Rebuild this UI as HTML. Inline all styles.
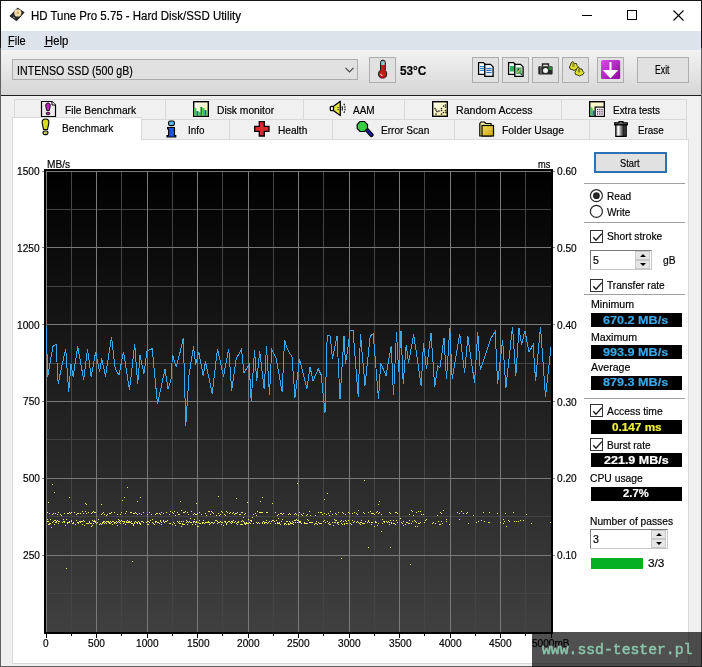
<!DOCTYPE html>
<html><head><meta charset="utf-8">
<style>
*{margin:0;padding:0;box-sizing:border-box}
html,body{width:702px;height:667px;overflow:hidden;background:#f0f0f0}
body{position:relative;font-family:"Liberation Sans",sans-serif;color:#000}
.a{position:absolute}
.t{position:absolute;line-height:1;white-space:nowrap;transform-origin:0 0;-webkit-text-stroke-width:0.2px}
.btn{position:absolute;background:#e1e1e1;border:1px solid #adadad}
.tab{position:absolute;background:#f0f0f0;border:1px solid #d9d9d9;border-bottom:none}
.sep{position:absolute;height:1px;background:#a0a0a0;left:584px;width:101px}
.vbox{position:absolute;left:591px;width:91px;height:14px;background:#000}
.chk{position:absolute;left:590px;width:13px;height:13px;border:1px solid #333;background:#fff}
.chk svg{position:absolute;left:1px;top:1px}
.spin{position:absolute;background:#fff;border:1px solid #7a7a7a;border-right-color:#c8c8c8;border-bottom-color:#c8c8c8}
.sb{position:absolute;width:15px;height:9px;background:#e6e6e6;border:1px solid #c8c8c8}
</style></head><body>
<!-- window frame -->
<div class="a" style="left:0;top:0;width:702px;height:667px;background:#5f5f5f"></div>
<div class="a" style="left:0;top:0;width:702px;height:48px;background:#161616"></div>
<div class="a" style="left:1px;top:1px;width:700px;height:665px;background:#f0f0f0"></div>
<div class="a" style="left:1px;top:1px;width:700px;height:30px;background:#fff"></div>
<svg class="a" style="left:8px;top:6px" width="18" height="17" viewBox="0 0 18 17">
 <path d="M9.6 2.1L16.1 6.4L8.6 14.8L1.9 10Z" fill="#262626" stroke="#111" stroke-width="0.8"/>
 <circle cx="9.8" cy="6.9" r="3.6" fill="#eedcae"/>
 <circle cx="9.8" cy="6.9" r="1.3" fill="#cfb468"/>
 <path d="M5 11L7 12" stroke="#888" stroke-width="1.2"/>
</svg>
<div class="a" style="left:582px;top:15px;width:10px;height:1px;background:#000"></div>
<div class="a" style="left:627px;top:10px;width:10px;height:10px;border:1px solid #000"></div>
<svg class="a" style="left:673px;top:10px" width="11" height="11" viewBox="0 0 11 11"><path d="M0.5 0.5L10.5 10.5M10.5 0.5L0.5 10.5" stroke="#000" stroke-width="1.1"/></svg>

<div class="a" style="left:1px;top:31px;width:700px;height:19px;background:#dde3ea"></div>
<div class="a" style="left:8px;top:46px;width:6px;height:1px;background:#000"></div>
<div class="a" style="left:44px;top:46px;width:8px;height:1px;background:#000"></div>

<div class="a" style="left:1px;top:50px;width:700px;height:45px;background:linear-gradient(#f3f3f3,#d6d6d6)"></div>
<!-- drive combo -->
<div class="a" style="left:12px;top:59px;width:346px;height:21px;background:#e1e1e1;border:1px solid #acacac"></div>
<svg class="a" style="left:345px;top:67px" width="9" height="6" viewBox="0 0 9 6"><path d="M0.5 0.8L4.5 4.8L8.5 0.8" stroke="#444" stroke-width="1.2" fill="none"/></svg>
<!-- thermometer -->
<div class="btn" style="left:369px;top:57px;width:27px;height:26px"></div>
<svg class="a" style="left:369px;top:57px" width="27" height="26" viewBox="0 0 27 26">
 <path d="M11.5 13V5.5A2.4 2.4 0 0 1 16.3 5.5V13Z" fill="#c81c1c" stroke="#1a1a1a" stroke-width="1"/>
 <rect x="12.2" y="4.2" width="3.4" height="3.8" fill="#70d8d8"/>
 <circle cx="13.6" cy="17" r="4.1" fill="#c81818" stroke="#1a1a1a" stroke-width="1"/>
 <rect x="12" y="12" width="3.8" height="3" fill="#c81818"/>
 <path d="M11.6 16.8Q12 18.6 13.5 18.6" stroke="#fff" stroke-width="1" fill="none"/>
</svg>
<!-- toolbar buttons -->
<div class="btn" style="left:472px;top:57px;width:27px;height:26px"></div>
<div class="btn" style="left:502px;top:57px;width:27px;height:26px"></div>
<div class="btn" style="left:532px;top:57px;width:27px;height:26px"></div>
<div class="btn" style="left:562px;top:57px;width:27px;height:26px"></div>
<div class="btn" style="left:597px;top:57px;width:27px;height:26px"></div>
<div class="btn" style="left:637px;top:57px;width:52px;height:26px"></div>
<svg class="a" style="left:472px;top:57px" width="27" height="26" viewBox="0 0 27 26">
 <path d="M6.6 5.6H11.5L13 7.1V17.4H6.6Z" fill="#fff" stroke="#000" stroke-width="1.3"/>
 <path d="M8 9.5H12.5M8 11.4H12.5M8 13.4H12.5" stroke="#2e86c8" stroke-width="1.1"/>
 <path d="M12.8 7.4H18.6L21.1 9.9V19.4H12.8Z" fill="#e4eefa" stroke="#000" stroke-width="1.3"/>
 <path d="M14.3 11.5H19.5M14.3 13.4H19.5M14.3 15.5H19.5" stroke="#2e70c0" stroke-width="1.1"/>
</svg>
<svg class="a" style="left:502px;top:57px" width="27" height="26" viewBox="0 0 27 26">
 <path d="M6.6 5.6H11.5L13 7.1V17.4H6.6Z" fill="#fff" stroke="#000" stroke-width="1.3"/>
 <rect x="8" y="9" width="4.5" height="5.5" fill="#30b060"/>
 <path d="M12.8 7.4H18.6L21.1 9.9V19.4H12.8Z" fill="#eef4f0" stroke="#000" stroke-width="1.3"/>
 <rect x="14.3" y="10.5" width="5.3" height="6.5" fill="#40a860"/>
 <path d="M15.5 16L18.5 12" stroke="#c8c040" stroke-width="1.2"/>
 <circle cx="16.5" cy="12.3" r="0.6" fill="#000"/><circle cx="19.3" cy="17.3" r="0.7" fill="#000"/>
</svg>
<svg class="a" style="left:532px;top:57px" width="27" height="26" viewBox="0 0 27 26">
 <path d="M10.5 9V7H16.5V9" fill="none" stroke="#222" stroke-width="1.4"/>
 <rect x="6.3" y="9.2" width="14.3" height="8.3" rx="0.8" fill="#262626"/>
 <rect x="8.4" y="9.2" width="1" height="8.3" fill="#888"/>
 <rect x="16.5" y="10" width="3.5" height="3" fill="#1c8c30"/>
 <circle cx="13.5" cy="13.4" r="2.5" fill="#f4f4f4"/>
</svg>
<svg class="a" style="left:562px;top:57px" width="27" height="26" viewBox="0 0 27 26">
 <g stroke="#3a3a10" stroke-width="1" fill="#dede30">
  <path d="M11 4.5L12.5 6.5L14.5 6.5L15 8.5L16.5 10L15.5 12L14 12.5L12 13.5L10 12.5L8 12L7.5 10L8.5 8L9 6Z"/>
  <path d="M16.5 10L18 12L20 12L20.5 14L22 15.5L21 17.5L19.5 18L17.5 19L15.5 18L13.5 17.5L13 15.5L14 13.5L14.5 11.5Z"/>
 </g>
 <path d="M11 6V10M12 6V10M16.5 11.5V15.5M17.5 11.5V15.5" stroke="#6a6a30" stroke-width="0.8"/>
</svg>
<svg class="a" style="left:597px;top:57px" width="27" height="26" viewBox="0 0 27 26">
 <defs><linearGradient id="pg" x1="0" y1="0" x2="1" y2="1"><stop offset="0" stop-color="#d850e8"/><stop offset="1" stop-color="#8a0898"/></linearGradient></defs>
 <rect x="4" y="3" width="19.2" height="19" rx="1.5" fill="url(#pg)"/>
 <path d="M13.5 5V17.5M8 14L13.5 20L19 14Z" stroke="#fff" stroke-width="2" fill="#fff" stroke-linejoin="miter"/>
</svg>
<div class="a" style="left:1px;top:95px;width:700px;height:1px;background:#1e1e1e"></div>

<!-- tab row 1 -->
<div class="tab" style="left:14px;top:99px;width:152px;height:20px"></div>
<div class="tab" style="left:165px;top:99px;width:139px;height:20px"></div>
<div class="tab" style="left:303px;top:99px;width:102px;height:20px"></div>
<div class="tab" style="left:404px;top:99px;width:158px;height:20px"></div>
<div class="tab" style="left:561px;top:99px;width:126px;height:20px"></div>
<!-- tab row 2 -->
<div class="tab" style="left:141px;top:119px;width:89px;height:21px"></div>
<div class="tab" style="left:229px;top:119px;width:104px;height:21px"></div>
<div class="tab" style="left:332px;top:119px;width:123px;height:21px"></div>
<div class="tab" style="left:454px;top:119px;width:136px;height:21px"></div>
<div class="tab" style="left:589px;top:119px;width:98px;height:21px"></div>
<!-- content panel -->
<div class="a" style="left:12px;top:139px;width:677px;height:525px;background:#fff;border:1px solid #d9d9d9"></div>
<div class="a" style="left:12px;top:117px;width:130px;height:23px;background:#fff;border:1px solid #d9d9d9;border-bottom:none"></div>

<!-- tab icons -->
<svg class="a" style="left:40px;top:100px" width="17" height="18" viewBox="0 0 17 18">
 <path d="M1.5 1.5H12L15.5 5V16.5H1.5Z" fill="#ececec" stroke="#000" stroke-width="1.2"/>
 <path d="M12 1.5V5H15.5" fill="#fff" stroke="#000" stroke-width="1"/>
 <path d="M8 3C9.8 3 10.6 4.5 10.2 6.5L9.3 10.5H6.7L5.8 6.5C5.4 4.5 6.2 3 8 3Z" fill="#c020c0" stroke="#000" stroke-width="0.9"/>
 <rect x="6.3" y="12.3" width="3.4" height="2.4" rx="1" fill="#c020c0" stroke="#000" stroke-width="0.9"/>
</svg>
<svg class="a" style="left:41px;top:118px" width="9" height="18" viewBox="0 0 9 18">
 <path d="M4.5 1C7 1 8.3 2.6 7.8 5.2L6.5 11.5H2.5L1.2 5.2C0.7 2.6 2 1 4.5 1Z" fill="#d8d828" stroke="#000" stroke-width="1.1"/>
 <rect x="2" y="13" width="5" height="3.6" rx="1.6" fill="#c8c860" stroke="#000" stroke-width="1.1"/>
</svg>
<svg class="a" style="left:193px;top:101px" width="16" height="16" viewBox="0 0 16 16">
 <defs><linearGradient id="dmg" x1="0" y1="0" x2="1" y2="1"><stop offset="0" stop-color="#fff"/><stop offset="1" stop-color="#f8f0a0"/></linearGradient></defs>
 <rect x="0.7" y="0.7" width="14.6" height="14.6" fill="url(#dmg)" stroke="#000" stroke-width="1.4"/>
 <path d="M1.4 7H3.4V14.6H1.4Z" fill="#30d040"/><path d="M3.4 10H5.4V14.6H3.4Z" fill="#1a7080"/>
 <path d="M5.4 11H7.4V14.6H5.4Z" fill="#30d040"/><path d="M7.4 6H9.4V14.6H7.4Z" fill="#1a8040"/>
 <path d="M9.4 7H11.4V14.6H9.4Z" fill="#30d040"/><path d="M11.4 9H13.4V14.6H11.4Z" fill="#1a7080"/>
 <path d="M13.4 10H14.6V14.6H13.4Z" fill="#30d040"/>
</svg>
<svg class="a" style="left:329px;top:100px" width="18" height="17" viewBox="0 0 18 17">
 <path d="M4.3 6.5L11.3 1.3V15.5L4.3 10.5Z" fill="#e4e43a" stroke="#000" stroke-width="1.3" stroke-linejoin="round"/>
 <rect x="1.3" y="6.3" width="3.2" height="4.4" rx="1.2" fill="#fff" stroke="#000" stroke-width="1.3"/>
 <rect x="8.6" y="7" width="1" height="1" fill="#000"/><rect x="8.6" y="9" width="1" height="1" fill="#000"/>
 <path d="M13 6.2Q14 8.4 13 10.6" stroke="#000" stroke-width="1.1" fill="none"/>
 <path d="M14.8 3.8Q17.3 8.4 14.8 13" stroke="#000" stroke-width="1.1" fill="none" stroke-dasharray="1.6 1"/>
</svg>
<svg class="a" style="left:432px;top:101px" width="16" height="16" viewBox="0 0 16 16">
 <defs><linearGradient id="rag" x1="0" y1="0" x2="1" y2="1"><stop offset="0" stop-color="#fffff0"/><stop offset="1" stop-color="#f6eea0"/></linearGradient></defs>
 <rect x="0.7" y="0.7" width="14.6" height="14.6" fill="url(#rag)" stroke="#000" stroke-width="1.4"/>
 <g fill="#202020"><circle cx="3" cy="7.5" r="0.8"/><circle cx="5" cy="10.5" r="0.85"/><circle cx="7" cy="10" r="0.85"/><circle cx="9.5" cy="7.5" r="0.85"/><circle cx="9.5" cy="9.5" r="0.85"/><circle cx="11.5" cy="5" r="0.85"/><circle cx="13.5" cy="4" r="0.85"/><circle cx="13.5" cy="6" r="0.85"/><circle cx="13.5" cy="9.5" r="0.85"/><circle cx="11.5" cy="11.5" r="0.85"/><circle cx="14" cy="11.5" r="0.85"/><circle cx="4" cy="13" r="0.85"/><circle cx="9.5" cy="13" r="0.85"/><circle cx="4" cy="9" r="0.85"/></g>
</svg>
<svg class="a" style="left:589px;top:101px" width="16" height="16" viewBox="0 0 16 16">
 <rect x="0.7" y="0.7" width="14.6" height="14.6" fill="#faf6cc" stroke="#000" stroke-width="1.4"/>
 <path d="M1.4 6.5H3.6V14.6H1.4Z" fill="#30d040"/><path d="M3.6 9.5H5.6V14.6H3.6Z" fill="#1a6a80"/>
 <path d="M6.2 15.3V6.2H15.3" fill="none" stroke="#000" stroke-width="1.3"/>
 <rect x="6.9" y="6.9" width="7.7" height="7.7" fill="#f6f0fa"/>
 <g fill="#3a203a"><rect x="8" y="8" width="1.2" height="1.2"/><rect x="10.2" y="8" width="1.2" height="1.2"/><rect x="12.4" y="8" width="1.2" height="1.2"/><rect x="8" y="10.2" width="1.2" height="1.2"/><rect x="10.2" y="10.2" width="1.2" height="1.2"/><rect x="12.4" y="10.2" width="1.2" height="1.2"/><rect x="8" y="12.4" width="1.2" height="1.2"/><rect x="10.2" y="12.4" width="1.2" height="1.2"/><rect x="12.4" y="12.4" width="1.2" height="1.2"/></g>
</svg>
<svg class="a" style="left:166px;top:120px" width="11" height="18" viewBox="0 0 11 18">
 <rect x="2.6" y="1" width="5.8" height="4.6" rx="1.6" fill="#58b8f0" stroke="#000" stroke-width="1.1"/>
 <path d="M1.5 7.5H8.5V15.5H9.8V17H1V15.5H2.6V9H1.5Z" fill="#2050e0" stroke="#000" stroke-width="1.1"/>
</svg>
<svg class="a" style="left:254px;top:121px" width="16" height="16" viewBox="0 0 16 16">
 <path d="M5.3 0.7H10.3V5.3H15V10.3H10.3V15H5.3V10.3H0.7V5.3H5.3Z" fill="#d82c2c" stroke="#000" stroke-width="1.3"/>
</svg>
<svg class="a" style="left:356px;top:120px" width="18" height="18" viewBox="0 0 18 18">
 <path d="M10.5 9.5L15.5 15" stroke="#000" stroke-width="4.2" stroke-linecap="round"/>
 <path d="M10.5 9.5L15.5 15" stroke="#1a1aa0" stroke-width="2.2" stroke-linecap="round"/>
 <path d="M4 1.5H8.5L11.5 4.5V8.5L8.5 11.5H4L1.2 8.5V4.5Z" fill="#38d040" stroke="#000" stroke-width="1.2"/>
</svg>
<svg class="a" style="left:479px;top:121px" width="16" height="16" viewBox="0 0 16 16">
 <defs><linearGradient id="fg" x1="0" y1="0" x2="1" y2="1"><stop offset="0" stop-color="#f0e060"/><stop offset="1" stop-color="#d0a010"/></linearGradient></defs>
 <path d="M0.8 2.5L2 1H5.5L6.8 2.5H12V15H0.8Z" fill="#f0e8a0" stroke="#000" stroke-width="1.2"/>
 <rect x="3" y="4.5" width="11.5" height="10.5" fill="url(#fg)" stroke="#000" stroke-width="1.2"/>
</svg>
<svg class="a" style="left:614px;top:121px" width="14" height="16" viewBox="0 0 14 16">
 <defs><linearGradient id="tg" x1="0" y1="0" x2="1" y2="0"><stop offset="0" stop-color="#999"/><stop offset="0.25" stop-color="#fff"/><stop offset="0.5" stop-color="#888"/><stop offset="0.75" stop-color="#222"/><stop offset="1" stop-color="#555"/></linearGradient></defs>
 <path d="M5 0.7H9V1.8H13.3V3.8H0.7V1.8H5Z" fill="#777" stroke="#000" stroke-width="1.2"/>
 <path d="M1.8 3.8H12.2V15.3H1.8Z" fill="url(#tg)" stroke="#000" stroke-width="1.2"/>
</svg>

<svg width="702" height="667" style="position:absolute;left:0;top:0">
<defs><linearGradient id="bg" x1="0" y1="0" x2="0" y2="1"><stop offset="0" stop-color="#000000"/><stop offset="1" stop-color="#404040"/></linearGradient></defs>
<rect x="44" y="169" width="509" height="465" fill="#000"/>
<rect x="46" y="171" width="505" height="461" fill="url(#bg)"/>
<path d="M71.5 171V632M121.5 171V632M172.5 171V632M222.5 171V632M273.5 171V632M323.5 171V632M374.5 171V632M424.5 171V632M475.5 171V632M525.5 171V632M46 209.5H551M46 286.5H551M46 363.5H551M46 439.5H551M46 516.5H551M46 593.5H551" stroke="#444444" stroke-width="1" fill="none"/>
<path d="M46.5 171V632M96.5 171V632M147.5 171V632M197.5 171V632M248.5 171V632M298.5 171V632M349.5 171V632M399.5 171V632M450.5 171V632M500.5 171V632M551.5 171V632M46 171.5H551M46 247.5H551M46 324.5H551M46 401.5H551M46 478.5H551M46 555.5H551" stroke="#7a7a7a" stroke-width="1" fill="none"/>
<path d="M47 512h1v1h-1zM47 519h1v1h-1zM47 521h1v1h-1zM48 502h1v1h-1zM48 521h1v1h-1zM48 524h1v1h-1zM49 513h1v1h-1zM49 523h1v1h-1zM49 524h1v1h-1zM50 519h1v1h-1zM50 523h1v1h-1zM51 527h1v1h-1zM52 484h1v1h-1zM52 514h1v1h-1zM52 522h1v1h-1zM53 513h1v1h-1zM53 521h1v1h-1zM54 492h1v1h-1zM54 520h1v1h-1zM54 524h1v1h-1zM55 513h1v1h-1zM55 520h1v1h-1zM55 522h1v1h-1zM56 521h1v1h-1zM56 522h1v1h-1zM57 514h1v1h-1zM57 520h1v1h-1zM58 512h1v1h-1zM58 521h1v1h-1zM58 523h1v1h-1zM59 521h1v1h-1zM60 514h1v1h-1zM61 515h1v1h-1zM62 522h1v1h-1zM63 519h1v1h-1zM63 521h1v1h-1zM64 513h1v1h-1zM64 521h1v1h-1zM64 522h1v1h-1zM65 525h1v1h-1zM66 519h1v1h-1zM66 568h1v1h-1zM67 513h1v1h-1zM67 522h1v1h-1zM67 523h1v1h-1zM68 513h1v1h-1zM68 522h1v1h-1zM69 497h1v1h-1zM69 512h1v1h-1zM69 521h1v1h-1zM69 522h1v1h-1zM70 513h1v1h-1zM71 512h1v1h-1zM71 520h1v1h-1zM71 521h1v1h-1zM72 523h1v1h-1zM73 522h1v1h-1zM73 523h1v1h-1zM74 512h1v1h-1zM75 524h1v1h-1zM76 514h1v1h-1zM76 520h1v1h-1zM77 513h1v1h-1zM77 522h1v1h-1zM78 513h1v1h-1zM78 522h1v1h-1zM78 523h1v1h-1zM79 521h1v1h-1zM80 513h1v1h-1zM80 521h1v1h-1zM80 522h1v1h-1zM81 521h1v1h-1zM82 511h1v1h-1zM82 521h1v1h-1zM82 524h1v1h-1zM83 513h1v1h-1zM83 520h1v1h-1zM84 521h1v1h-1zM84 525h1v1h-1zM85 503h1v1h-1zM85 511h1v1h-1zM86 504h1v1h-1zM86 513h1v1h-1zM86 523h1v1h-1zM87 523h1v1h-1zM88 512h1v1h-1zM88 523h1v1h-1zM89 521h1v1h-1zM89 522h1v1h-1zM90 523h1v1h-1zM91 513h1v1h-1zM91 523h1v1h-1zM91 526h1v1h-1zM92 512h1v1h-1zM92 520h1v1h-1zM92 525h1v1h-1zM93 511h1v1h-1zM93 521h1v1h-1zM93 523h1v1h-1zM94 512h1v1h-1zM94 520h1v1h-1zM94 521h1v1h-1zM95 512h1v1h-1zM95 521h1v1h-1zM95 522h1v1h-1zM96 523h1v1h-1zM97 522h1v1h-1zM98 519h1v1h-1zM99 524h1v1h-1zM100 523h1v1h-1zM101 504h1v1h-1zM101 514h1v1h-1zM101 524h1v1h-1zM102 513h1v1h-1zM102 522h1v1h-1zM102 523h1v1h-1zM103 512h1v1h-1zM103 521h1v1h-1zM103 522h1v1h-1zM104 514h1v1h-1zM104 521h1v1h-1zM104 523h1v1h-1zM105 522h1v1h-1zM106 515h1v1h-1zM106 521h1v1h-1zM106 523h1v1h-1zM107 514h1v1h-1zM107 521h1v1h-1zM108 521h1v1h-1zM108 522h1v1h-1zM109 513h1v1h-1zM109 522h1v1h-1zM109 523h1v1h-1zM110 513h1v1h-1zM110 521h1v1h-1zM110 523h1v1h-1zM111 512h1v1h-1zM111 522h1v1h-1zM112 521h1v1h-1zM112 524h1v1h-1zM113 521h1v1h-1zM114 512h1v1h-1zM114 522h1v1h-1zM114 523h1v1h-1zM115 522h1v1h-1zM116 521h1v1h-1zM116 523h1v1h-1zM117 514h1v1h-1zM117 522h1v1h-1zM117 525h1v1h-1zM118 519h1v1h-1zM118 521h1v1h-1zM119 520h1v1h-1zM119 522h1v1h-1zM120 514h1v1h-1zM120 521h1v1h-1zM120 523h1v1h-1zM121 512h1v1h-1zM121 520h1v1h-1zM122 500h1v1h-1zM122 521h1v1h-1zM123 521h1v1h-1zM123 523h1v1h-1zM124 497h1v1h-1zM124 521h1v1h-1zM124 522h1v1h-1zM125 513h1v1h-1zM125 524h1v1h-1zM126 511h1v1h-1zM126 521h1v1h-1zM126 522h1v1h-1zM127 487h1v1h-1zM127 520h1v1h-1zM127 522h1v1h-1zM128 521h1v1h-1zM128 522h1v1h-1zM129 521h1v1h-1zM129 522h1v1h-1zM130 512h1v1h-1zM130 522h1v1h-1zM131 512h1v1h-1zM131 521h1v1h-1zM131 523h1v1h-1zM132 523h1v1h-1zM132 561h1v1h-1zM133 513h1v1h-1zM133 524h1v1h-1zM133 525h1v1h-1zM134 513h1v1h-1zM134 522h1v1h-1zM134 523h1v1h-1zM135 512h1v1h-1zM135 521h1v1h-1zM136 513h1v1h-1zM136 522h1v1h-1zM137 501h1v1h-1zM137 514h1v1h-1zM137 522h1v1h-1zM137 523h1v1h-1zM138 521h1v1h-1zM139 513h1v1h-1zM139 522h1v1h-1zM139 523h1v1h-1zM140 497h1v1h-1zM140 523h1v1h-1zM140 524h1v1h-1zM141 514h1v1h-1zM141 521h1v1h-1zM142 521h1v1h-1zM143 512h1v1h-1zM143 522h1v1h-1zM146 522h1v1h-1zM147 514h1v1h-1zM147 521h1v1h-1zM147 524h1v1h-1zM148 521h1v1h-1zM148 524h1v1h-1zM149 512h1v1h-1zM149 522h1v1h-1zM150 520h1v1h-1zM151 514h1v1h-1zM152 519h1v1h-1zM152 522h1v1h-1zM153 523h1v1h-1zM154 524h1v1h-1zM155 514h1v1h-1zM155 521h1v1h-1zM155 522h1v1h-1zM156 513h1v1h-1zM156 521h1v1h-1zM157 513h1v1h-1zM157 522h1v1h-1zM158 522h1v1h-1zM159 513h1v1h-1zM159 523h1v1h-1zM160 514h1v1h-1zM160 520h1v1h-1zM160 521h1v1h-1zM161 512h1v1h-1zM161 522h1v1h-1zM161 524h1v1h-1zM163 513h1v1h-1zM163 520h1v1h-1zM163 521h1v1h-1zM164 522h1v1h-1zM165 521h1v1h-1zM166 512h1v1h-1zM166 521h1v1h-1zM167 520h1v1h-1zM169 514h1v1h-1zM169 523h1v1h-1zM170 511h1v1h-1zM170 523h1v1h-1zM172 512h1v1h-1zM172 524h1v1h-1zM173 513h1v1h-1zM173 522h1v1h-1zM174 511h1v1h-1zM174 523h1v1h-1zM175 515h1v1h-1zM175 525h1v1h-1zM177 512h1v1h-1zM177 521h1v1h-1zM178 514h1v1h-1zM178 522h1v1h-1zM179 514h1v1h-1zM179 521h1v1h-1zM179 523h1v1h-1zM180 501h1v1h-1zM180 523h1v1h-1zM181 510h1v1h-1zM181 521h1v1h-1zM181 526h1v1h-1zM182 523h1v1h-1zM182 524h1v1h-1zM183 512h1v1h-1zM183 521h1v1h-1zM183 524h1v1h-1zM184 512h1v1h-1zM184 524h1v1h-1zM185 511h1v1h-1zM186 520h1v1h-1zM186 522h1v1h-1zM187 512h1v1h-1zM187 521h1v1h-1zM187 524h1v1h-1zM188 514h1v1h-1zM188 522h1v1h-1zM189 521h1v1h-1zM190 518h1v1h-1zM190 522h1v1h-1zM191 511h1v1h-1zM191 522h1v1h-1zM192 524h1v1h-1zM193 514h1v1h-1zM193 521h1v1h-1zM193 522h1v1h-1zM194 513h1v1h-1zM194 519h1v1h-1zM194 521h1v1h-1zM195 514h1v1h-1zM195 522h1v1h-1zM195 524h1v1h-1zM196 503h1v1h-1zM196 514h1v1h-1zM196 521h1v1h-1zM196 522h1v1h-1zM197 513h1v1h-1zM197 526h1v1h-1zM198 522h1v1h-1zM198 526h1v1h-1zM199 512h1v1h-1zM199 520h1v1h-1zM199 523h1v1h-1zM200 523h1v1h-1zM201 514h1v1h-1zM202 522h1v1h-1zM202 523h1v1h-1zM203 520h1v1h-1zM203 522h1v1h-1zM204 523h1v1h-1zM205 513h1v1h-1zM205 522h1v1h-1zM206 515h1v1h-1zM206 522h1v1h-1zM207 522h1v1h-1zM208 511h1v1h-1zM208 521h1v1h-1zM208 522h1v1h-1zM209 511h1v1h-1zM209 522h1v1h-1zM209 524h1v1h-1zM210 514h1v1h-1zM210 523h1v1h-1zM211 511h1v1h-1zM211 522h1v1h-1zM212 512h1v1h-1zM212 522h1v1h-1zM213 513h1v1h-1zM213 523h1v1h-1zM214 522h1v1h-1zM215 520h1v1h-1zM216 515h1v1h-1zM216 520h1v1h-1zM217 521h1v1h-1zM217 523h1v1h-1zM218 496h1v1h-1zM218 513h1v1h-1zM218 522h1v1h-1zM219 515h1v1h-1zM219 522h1v1h-1zM220 514h1v1h-1zM220 521h1v1h-1zM221 511h1v1h-1zM221 522h1v1h-1zM221 524h1v1h-1zM222 512h1v1h-1zM222 522h1v1h-1zM223 525h1v1h-1zM224 514h1v1h-1zM224 521h1v1h-1zM225 515h1v1h-1zM225 521h1v1h-1zM225 522h1v1h-1zM226 511h1v1h-1zM226 523h1v1h-1zM226 524h1v1h-1zM227 512h1v1h-1zM227 522h1v1h-1zM228 521h1v1h-1zM229 513h1v1h-1zM229 521h1v1h-1zM230 512h1v1h-1zM230 522h1v1h-1zM231 521h1v1h-1zM231 523h1v1h-1zM232 513h1v1h-1zM232 521h1v1h-1zM232 522h1v1h-1zM233 512h1v1h-1zM233 520h1v1h-1zM234 514h1v1h-1zM234 522h1v1h-1zM235 513h1v1h-1zM235 521h1v1h-1zM236 498h1v1h-1zM236 513h1v1h-1zM236 523h1v1h-1zM237 512h1v1h-1zM237 522h1v1h-1zM237 524h1v1h-1zM238 521h1v1h-1zM238 522h1v1h-1zM239 514h1v1h-1zM240 514h1v1h-1zM240 524h1v1h-1zM241 512h1v1h-1zM241 521h1v1h-1zM241 524h1v1h-1zM242 512h1v1h-1zM242 520h1v1h-1zM242 524h1v1h-1zM243 517h1v1h-1zM243 521h1v1h-1zM244 514h1v1h-1zM244 522h1v1h-1zM244 523h1v1h-1zM245 513h1v1h-1zM245 523h1v1h-1zM245 524h1v1h-1zM246 522h1v1h-1zM246 523h1v1h-1zM247 502h1v1h-1zM247 523h1v1h-1zM248 519h1v1h-1zM248 523h1v1h-1zM249 522h1v1h-1zM250 520h1v1h-1zM250 523h1v1h-1zM251 520h1v1h-1zM251 521h1v1h-1zM252 517h1v1h-1zM253 514h1v1h-1zM253 523h1v1h-1zM255 513h1v1h-1zM256 515h1v1h-1zM256 522h1v1h-1zM257 511h1v1h-1zM257 523h1v1h-1zM258 522h1v1h-1zM259 512h1v1h-1zM259 523h1v1h-1zM260 501h1v1h-1zM260 512h1v1h-1zM261 512h1v1h-1zM262 497h1v1h-1zM262 512h1v1h-1zM262 522h1v1h-1zM262 523h1v1h-1zM263 521h1v1h-1zM264 522h1v1h-1zM264 523h1v1h-1zM265 522h1v1h-1zM266 512h1v1h-1zM266 520h1v1h-1zM266 522h1v1h-1zM267 512h1v1h-1zM267 523h1v1h-1zM268 522h1v1h-1zM269 521h1v1h-1zM270 523h1v1h-1zM271 521h1v1h-1zM272 503h1v1h-1zM272 520h1v1h-1zM273 520h1v1h-1zM274 521h1v1h-1zM275 512h1v1h-1zM275 523h1v1h-1zM276 520h1v1h-1zM277 515h1v1h-1zM277 522h1v1h-1zM277 523h1v1h-1zM278 514h1v1h-1zM278 518h1v1h-1zM278 523h1v1h-1zM279 522h1v1h-1zM279 523h1v1h-1zM280 513h1v1h-1zM280 524h1v1h-1zM281 513h1v1h-1zM281 521h1v1h-1zM282 514h1v1h-1zM282 519h1v1h-1zM283 513h1v1h-1zM284 523h1v1h-1zM284 524h1v1h-1zM285 523h1v1h-1zM286 521h1v1h-1zM286 524h1v1h-1zM287 521h1v1h-1zM288 514h1v1h-1zM288 523h1v1h-1zM288 524h1v1h-1zM289 513h1v1h-1zM289 521h1v1h-1zM289 524h1v1h-1zM290 514h1v1h-1zM290 522h1v1h-1zM290 523h1v1h-1zM291 523h1v1h-1zM292 521h1v1h-1zM292 523h1v1h-1zM293 522h1v1h-1zM293 524h1v1h-1zM294 514h1v1h-1zM294 520h1v1h-1zM295 513h1v1h-1zM295 520h1v1h-1zM295 522h1v1h-1zM296 514h1v1h-1zM296 519h1v1h-1zM297 483h1v1h-1zM297 520h1v1h-1zM297 522h1v1h-1zM298 515h1v1h-1zM298 520h1v1h-1zM299 512h1v1h-1zM299 521h1v1h-1zM299 522h1v1h-1zM300 521h1v1h-1zM300 522h1v1h-1zM301 514h1v1h-1zM301 523h1v1h-1zM302 515h1v1h-1zM303 513h1v1h-1zM304 522h1v1h-1zM304 523h1v1h-1zM305 523h1v1h-1zM306 515h1v1h-1zM306 523h1v1h-1zM307 514h1v1h-1zM307 519h1v1h-1zM307 523h1v1h-1zM308 520h1v1h-1zM309 511h1v1h-1zM309 522h1v1h-1zM310 515h1v1h-1zM310 522h1v1h-1zM311 522h1v1h-1zM312 522h1v1h-1zM314 524h1v1h-1zM315 515h1v1h-1zM315 523h1v1h-1zM316 521h1v1h-1zM316 523h1v1h-1zM317 524h1v1h-1zM318 512h1v1h-1zM318 522h1v1h-1zM319 523h1v1h-1zM320 512h1v1h-1zM320 523h1v1h-1zM321 512h1v1h-1zM321 523h1v1h-1zM322 514h1v1h-1zM323 521h1v1h-1zM324 499h1v1h-1zM324 513h1v1h-1zM324 520h1v1h-1zM325 522h1v1h-1zM326 514h1v1h-1zM327 493h1v1h-1zM327 521h1v1h-1zM328 513h1v1h-1zM328 523h1v1h-1zM329 515h1v1h-1zM329 522h1v1h-1zM329 524h1v1h-1zM330 511h1v1h-1zM330 524h1v1h-1zM332 514h1v1h-1zM332 522h1v1h-1zM333 525h1v1h-1zM334 519h1v1h-1zM334 522h1v1h-1zM335 513h1v1h-1zM335 520h1v1h-1zM335 522h1v1h-1zM336 514h1v1h-1zM336 520h1v1h-1zM337 522h1v1h-1zM337 523h1v1h-1zM338 512h1v1h-1zM338 522h1v1h-1zM338 524h1v1h-1zM340 521h1v1h-1zM341 520h1v1h-1zM341 523h1v1h-1zM341 558h1v1h-1zM342 512h1v1h-1zM342 524h1v1h-1zM343 513h1v1h-1zM343 521h1v1h-1zM344 523h1v1h-1zM344 524h1v1h-1zM345 514h1v1h-1zM345 520h1v1h-1zM346 521h1v1h-1zM346 523h1v1h-1zM347 523h1v1h-1zM348 512h1v1h-1zM348 520h1v1h-1zM349 513h1v1h-1zM350 523h1v1h-1zM351 524h1v1h-1zM352 513h1v1h-1zM352 520h1v1h-1zM353 522h1v1h-1zM354 512h1v1h-1zM354 521h1v1h-1zM356 513h1v1h-1zM356 522h1v1h-1zM357 514h1v1h-1zM357 521h1v1h-1zM358 510h1v1h-1zM358 522h1v1h-1zM359 523h1v1h-1zM360 522h1v1h-1zM360 524h1v1h-1zM361 520h1v1h-1zM361 522h1v1h-1zM362 523h1v1h-1zM363 512h1v1h-1zM363 523h1v1h-1zM364 480h1v1h-1zM364 513h1v1h-1zM364 523h1v1h-1zM365 521h1v1h-1zM367 522h1v1h-1zM368 512h1v1h-1zM368 520h1v1h-1zM368 521h1v1h-1zM368 547h1v1h-1zM369 522h1v1h-1zM370 511h1v1h-1zM371 513h1v1h-1zM371 522h1v1h-1zM371 524h1v1h-1zM372 513h1v1h-1zM372 522h1v1h-1zM373 513h1v1h-1zM374 514h1v1h-1zM374 526h1v1h-1zM375 521h1v1h-1zM375 522h1v1h-1zM376 512h1v1h-1zM376 522h1v1h-1zM377 511h1v1h-1zM377 525h1v1h-1zM378 504h1v1h-1zM378 513h1v1h-1zM378 523h1v1h-1zM379 501h1v1h-1zM379 512h1v1h-1zM381 514h1v1h-1zM381 531h1v1h-1zM382 519h1v1h-1zM382 523h1v1h-1zM383 521h1v1h-1zM384 521h1v1h-1zM384 522h1v1h-1zM386 521h1v1h-1zM387 522h1v1h-1zM388 521h1v1h-1zM389 512h1v1h-1zM389 522h1v1h-1zM389 524h1v1h-1zM390 513h1v1h-1zM390 520h1v1h-1zM390 547h1v1h-1zM391 522h1v1h-1zM391 523h1v1h-1zM393 520h1v1h-1zM393 523h1v1h-1zM394 523h1v1h-1zM395 512h1v1h-1zM395 524h1v1h-1zM396 512h1v1h-1zM396 520h1v1h-1zM397 513h1v1h-1zM397 522h1v1h-1zM400 518h1v1h-1zM401 522h1v1h-1zM402 523h1v1h-1zM403 521h1v1h-1zM403 525h1v1h-1zM405 524h1v1h-1zM406 522h1v1h-1zM407 522h1v1h-1zM408 523h1v1h-1zM409 514h1v1h-1zM409 520h1v1h-1zM409 523h1v1h-1zM410 564h1v1h-1zM411 510h1v1h-1zM411 523h1v1h-1zM412 511h1v1h-1zM412 521h1v1h-1zM413 515h1v1h-1zM414 520h1v1h-1zM415 521h1v1h-1zM415 526h1v1h-1zM416 512h1v1h-1zM416 522h1v1h-1zM417 526h1v1h-1zM418 511h1v1h-1zM418 523h1v1h-1zM419 523h1v1h-1zM420 511h1v1h-1zM420 522h1v1h-1zM421 514h1v1h-1zM423 514h1v1h-1zM424 522h1v1h-1zM425 520h1v1h-1zM426 519h1v1h-1zM432 523h1v1h-1zM433 522h1v1h-1zM435 523h1v1h-1zM437 515h1v1h-1zM438 521h1v1h-1zM439 524h1v1h-1zM440 512h1v1h-1zM440 524h1v1h-1zM441 513h1v1h-1zM441 521h1v1h-1zM442 523h1v1h-1zM443 510h1v1h-1zM446 519h1v1h-1zM446 521h1v1h-1zM449 524h1v1h-1zM457 512h1v1h-1zM459 513h1v1h-1zM459 519h1v1h-1zM461 511h1v1h-1zM463 513h1v1h-1zM466 513h1v1h-1zM467 512h1v1h-1zM468 523h1v1h-1zM473 515h1v1h-1zM476 522h1v1h-1zM478 521h1v1h-1zM481 520h1v1h-1zM483 512h1v1h-1zM484 521h1v1h-1zM488 522h1v1h-1zM489 512h1v1h-1zM489 522h1v1h-1zM497 513h1v1h-1zM500 522h1v1h-1zM503 519h1v1h-1zM503 523h1v1h-1zM504 521h1v1h-1zM505 513h1v1h-1zM506 526h1v1h-1zM508 520h1v1h-1zM509 521h1v1h-1zM513 512h1v1h-1zM514 521h1v1h-1zM516 521h1v1h-1zM518 521h1v1h-1zM520 520h1v1h-1zM523 520h1v1h-1zM526 514h1v1h-1zM531 523h1v1h-1zM550 522h1v1h-1z" fill="#ecec5a"/>
<polyline points="46.2,326.2 47.7,376.5 50.0,363.0 53.0,346.5 56.0,344.0 58.2,384.0 60.5,372.0 65.7,348.7 68.7,391.5 71.0,364.5 73.2,376.5 77.7,346.5 83.7,380.0 87.5,348.7 91.2,377.0 95.7,351.7 99.5,372.0 101.7,358.5 105.5,376.5 111.5,336.7 115.2,369.0 119.0,375.0 123.5,351.7 129.5,390.0 134.7,344.0 137.7,384.0 140.0,355.5 144.0,373.5 147.0,351.0 152.2,348.7 157.5,404.0 165.0,369.0 168.0,389.0 171.0,379.5 172.5,354.7 176.2,366.7 180.0,352.5 183.3,338.2 185.8,425.5 189.0,375.0 193.5,346.5 195.7,364.5 198.7,351.7 203.2,375.7 205.5,361.5 212.2,393.7 217.5,348.7 223.5,376.5 228.7,348.7 231.7,390.7 236.2,358.5 241.5,349.5 244.0,372.7 249.2,364.5 251.2,401.2 254.5,350.2 256.7,381.0 259.7,351.0 264.2,389.2 266.5,346.5 269.5,394.5 271.7,349.5 276.2,358.5 282.2,392.2 284.5,339.7 287.5,349.5 292.0,357.0 295.0,397.5 299.5,359.2 307.0,388.5 310.0,366.7 313.0,381.0 318.2,369.0 321.2,375.0 325.0,413.2 327.2,335.2 330.2,336.0 332.5,358.5 337.0,336.0 340.0,399.0 344.0,336.0 345.5,363.7 347.7,349.5 350.0,330.7 353.0,330.0 358.2,396.7 360.5,334.5 365.0,385.5 370.2,336.0 373.2,333.7 378.5,399.0 380.7,363.0 386.0,375.7 391.2,345.7 393.5,395.2 396.5,332.2 398.7,372.0 401.0,330.7 403.2,384.0 406.2,345.0 408.5,363.0 413.7,334.5 421.2,386.2 423.5,343.5 426.5,369.0 431.0,333.0 434.7,387.0 437.7,366.0 440.0,367.5 444.0,338.0 446.5,379.4 449.8,328.2 452.2,378.5 459.7,334.0 464.6,372.8 467.9,336.5 470.4,354.6 474.5,382.7 477.8,332.3 480.3,370.3 491.0,338.1 495.2,331.5 497.6,383.5 502.6,339.8 505.9,387.6 512.5,326.6 515.8,376.0 519.0,328.2 521.6,344.7 524.9,330.7 529.0,352.0 533.1,344.7 535.6,381.0 540.5,326.6 545.5,396.7 551.3,344.7" fill="none" stroke="#3aa8e8" stroke-width="1" shape-rendering="crispEdges"/>
<path d="M45 170V633H552V170H45" stroke="#000" stroke-width="2" fill="none"/>
<path d="M46.5 634V638M71.5 634V636M96.5 634V638M121.5 634V636M147.5 634V638M172.5 634V636M197.5 634V638M222.5 634V636M248.5 634V638M273.5 634V636M298.5 634V638M323.5 634V636M349.5 634V638M374.5 634V636M399.5 634V638M424.5 634V636M450.5 634V638M475.5 634V636M500.5 634V638M525.5 634V636M551.5 634V638" stroke="#000" stroke-width="1"/>
<path d="M42 171.5H44M553 171.5H555M42 247.5H44M553 247.5H555M42 324.5H44M553 324.5H555M42 401.5H44M553 401.5H555M42 478.5H44M553 478.5H555M42 555.5H44M553 555.5H555" stroke="#8a8a8a" stroke-width="1"/>
</svg>

<!-- right panel -->
<div class="a" style="left:594px;top:152px;width:73px;height:21px;background:#e1e1e1;border:2px solid #2a72b8"></div>
<div class="sep" style="top:183px"></div>
<svg class="a" style="left:589px;top:189px" width="15" height="30" viewBox="0 0 15 30">
 <circle cx="7.4" cy="6.7" r="6" fill="#fff" stroke="#262626" stroke-width="1.2"/>
 <circle cx="7.4" cy="6.7" r="3.4" fill="#262626"/>
 <circle cx="7.4" cy="22.4" r="6" fill="#fff" stroke="#262626" stroke-width="1.2"/>
</svg>
<div class="sep" style="top:222px"></div>
<div class="chk" style="top:230px"><svg width="11" height="11" viewBox="0 0 11 11"><path d="M1.3 5.3L4 8.3L9.8 1.6" stroke="#1a1a1a" stroke-width="1.4" fill="none"/></svg></div>
<div class="spin" style="left:590px;top:250px;width:62px;height:20px"></div>
<div class="sb" style="left:635px;top:251px"></div><div class="sb" style="left:635px;top:260px"></div>
<svg class="a" style="left:639px;top:253px" width="8" height="15" viewBox="0 0 8 15"><path d="M4 1L7 4H1Z M1 10H7L4 13Z" fill="#000"/></svg>
<div class="chk" style="top:279px"><svg width="11" height="11" viewBox="0 0 11 11"><path d="M1.3 5.3L4 8.3L9.8 1.6" stroke="#1a1a1a" stroke-width="1.4" fill="none"/></svg></div>
<div class="sep" style="top:294px"></div>
<div class="vbox" style="top:313px"></div>
<div class="vbox" style="top:345px"></div>
<div class="vbox" style="top:376px"></div>
<div class="sep" style="top:398px"></div>
<div class="chk" style="top:404px"><svg width="11" height="11" viewBox="0 0 11 11"><path d="M1.3 5.3L4 8.3L9.8 1.6" stroke="#1a1a1a" stroke-width="1.4" fill="none"/></svg></div>
<div class="vbox" style="top:420px"></div>
<div class="chk" style="top:438px"><svg width="11" height="11" viewBox="0 0 11 11"><path d="M1.3 5.3L4 8.3L9.8 1.6" stroke="#1a1a1a" stroke-width="1.4" fill="none"/></svg></div>
<div class="vbox" style="top:453px"></div>
<div class="vbox" style="top:487px"></div>
<div class="spin" style="left:590px;top:529px;width:78px;height:20px"></div>
<div class="sb" style="left:651px;top:530px"></div><div class="sb" style="left:651px;top:539px"></div>
<svg class="a" style="left:655px;top:532px" width="8" height="15" viewBox="0 0 8 15"><path d="M4 1L7 4H1Z M1 10H7L4 13Z" fill="#000"/></svg>
<div class="a" style="left:591px;top:558px;width:52px;height:11px;background:#06b025"></div>

<div class="t" style="left:30.50px;top:9.70px;font-size:12px;font-weight:normal;font-family:'Liberation Sans';color:#000;transform:scaleX(0.9538)">HD Tune Pro 5.75 - Hard Disk/SSD Utility</div>
<div class="t" style="left:8.30px;top:34.60px;font-size:12.5px;font-weight:normal;font-family:'Liberation Sans';color:#000;transform:scaleX(0.8800)">File</div>
<div class="t" style="left:44.50px;top:34.60px;font-size:12.5px;font-weight:normal;font-family:'Liberation Sans';color:#000;transform:scaleX(0.9038)">Help</div>
<div class="t" style="left:16.50px;top:64.50px;font-size:12.5px;font-weight:normal;font-family:'Liberation Sans';color:#000;transform:scaleX(0.8507)">INTENSO SSD (500 gB)</div>
<div class="t" style="left:399.80px;top:64.10px;font-size:13px;font-weight:bold;font-family:'Liberation Sans';color:#000;transform:scaleX(0.9069)">53°C</div>
<div class="t" style="left:654.60px;top:63.70px;font-size:12px;font-weight:normal;font-family:'Liberation Sans';color:#000;transform:scaleX(0.7238)">Exit</div>
<div class="t" style="left:64.60px;top:104.70px;font-size:11.5px;font-weight:normal;font-family:'Liberation Sans';color:#000;transform:scaleX(0.8900)">File Benchmark</div>
<div class="t" style="left:216.80px;top:104.70px;font-size:11.5px;font-weight:normal;font-family:'Liberation Sans';color:#000;transform:scaleX(0.8938)">Disk monitor</div>
<div class="t" style="left:353.40px;top:104.70px;font-size:11.5px;font-weight:normal;font-family:'Liberation Sans';color:#000;transform:scaleX(0.8680)">AAM</div>
<div class="t" style="left:455.50px;top:104.70px;font-size:11.5px;font-weight:normal;font-family:'Liberation Sans';color:#000;transform:scaleX(0.9217)">Random Access</div>
<div class="t" style="left:612.70px;top:104.70px;font-size:11.5px;font-weight:normal;font-family:'Liberation Sans';color:#000;transform:scaleX(0.8655)">Extra tests</div>
<div class="t" style="left:61.70px;top:122.70px;font-size:11.5px;font-weight:normal;font-family:'Liberation Sans';color:#000;transform:scaleX(0.8814)">Benchmark</div>
<div class="t" style="left:187.70px;top:124.90px;font-size:11.5px;font-weight:normal;font-family:'Liberation Sans';color:#000;transform:scaleX(0.8579)">Info</div>
<div class="t" style="left:277.70px;top:124.90px;font-size:11.5px;font-weight:normal;font-family:'Liberation Sans';color:#000;transform:scaleX(0.8818)">Health</div>
<div class="t" style="left:380.60px;top:124.90px;font-size:11.5px;font-weight:normal;font-family:'Liberation Sans';color:#000;transform:scaleX(0.8800)">Error Scan</div>
<div class="t" style="left:502.10px;top:124.90px;font-size:11.5px;font-weight:normal;font-family:'Liberation Sans';color:#000;transform:scaleX(0.9000)">Folder Usage</div>
<div class="t" style="left:637.50px;top:124.90px;font-size:11.5px;font-weight:normal;font-family:'Liberation Sans';color:#000;transform:scaleX(0.8567)">Erase</div>
<div class="t" style="left:619.80px;top:157.90px;font-size:11.5px;font-weight:normal;font-family:'Liberation Sans';color:#000;transform:scaleX(0.8080)">Start</div>
<div class="t" style="left:606.70px;top:190.70px;font-size:11.5px;font-weight:normal;font-family:'Liberation Sans';color:#000;transform:scaleX(0.8786)">Read</div>
<div class="t" style="left:606.70px;top:206.60px;font-size:11.5px;font-weight:normal;font-family:'Liberation Sans';color:#000;transform:scaleX(0.8741)">Write</div>
<div class="t" style="left:606.70px;top:231.30px;font-size:11.5px;font-weight:normal;font-family:'Liberation Sans';color:#000;transform:scaleX(0.8903)">Short stroke</div>
<div class="t" style="left:593.30px;top:254.50px;font-size:11.5px;font-weight:normal;font-family:'Liberation Sans';color:#000;transform:scaleX(0.9250)">5</div>
<div class="t" style="left:663.00px;top:254.50px;font-size:11.5px;font-weight:normal;font-family:'Liberation Sans';color:#000;transform:scaleX(0.8929)">gB</div>
<div class="t" style="left:606.70px;top:280.20px;font-size:11.5px;font-weight:normal;font-family:'Liberation Sans';color:#000;transform:scaleX(0.8833)">Transfer rate</div>
<div class="t" style="left:590.50px;top:298.70px;font-size:11.5px;font-weight:normal;font-family:'Liberation Sans';color:#000;transform:scaleX(0.9250)">Minimum</div>
<div class="t" style="left:590.50px;top:331.60px;font-size:11.5px;font-weight:normal;font-family:'Liberation Sans';color:#000;transform:scaleX(0.9250)">Maximum</div>
<div class="t" style="left:590.50px;top:361.50px;font-size:11.5px;font-weight:normal;font-family:'Liberation Sans';color:#000;transform:scaleX(0.9250)">Average</div>
<div class="t" style="left:606.50px;top:405.50px;font-size:11.5px;font-weight:normal;font-family:'Liberation Sans';color:#000;transform:scaleX(0.8984)">Access time</div>
<div class="t" style="left:606.50px;top:439.60px;font-size:11.5px;font-weight:normal;font-family:'Liberation Sans';color:#000;transform:scaleX(0.8740)">Burst rate</div>
<div class="t" style="left:590.00px;top:472.60px;font-size:11.5px;font-weight:normal;font-family:'Liberation Sans';color:#000;transform:scaleX(0.8983)">CPU usage</div>
<div class="t" style="left:590.40px;top:516.40px;font-size:11.5px;font-weight:normal;font-family:'Liberation Sans';color:#000;transform:scaleX(0.8894)">Number of passes</div>
<div class="t" style="left:593.30px;top:533.50px;font-size:11.5px;font-weight:normal;font-family:'Liberation Sans';color:#000;transform:scaleX(0.9250)">3</div>
<div class="t" style="left:648.40px;top:558.00px;font-size:11.5px;font-weight:normal;font-family:'Liberation Sans';color:#000;transform:scaleX(1.0250)">3/3</div>
<div class="t" style="left:603.20px;top:314.80px;font-size:11.5px;font-weight:bold;font-family:'Liberation Sans';color:#3ba7e6;transform:scaleX(1.0967)">670.2 MB/s</div>
<div class="t" style="left:603.20px;top:346.60px;font-size:11.5px;font-weight:bold;font-family:'Liberation Sans';color:#3ba7e6;transform:scaleX(1.0967)">993.9 MB/s</div>
<div class="t" style="left:603.20px;top:377.20px;font-size:11.5px;font-weight:bold;font-family:'Liberation Sans';color:#3ba7e6;transform:scaleX(1.0967)">879.3 MB/s</div>
<div class="t" style="left:612.20px;top:421.50px;font-size:11.5px;font-weight:bold;font-family:'Liberation Sans';color:#f2f23c;transform:scaleX(1.0204)">0.147 ms</div>
<div class="t" style="left:603.50px;top:455.30px;font-size:11.5px;font-weight:bold;font-family:'Liberation Sans';color:#ffffff;transform:scaleX(1.0883)">221.9 MB/s</div>
<div class="t" style="left:623.30px;top:488.30px;font-size:11.5px;font-weight:bold;font-family:'Liberation Sans';color:#ffffff;transform:scaleX(0.9778)">2.7%</div>
<div class="t" style="left:46.60px;top:158.50px;font-size:11px;font-weight:normal;font-family:'Liberation Sans';color:#000;transform:scaleX(0.9200)">MB/s</div>
<div class="t" style="left:537.90px;top:158.80px;font-size:11px;font-weight:normal;font-family:'Liberation Sans';color:#000;transform:scaleX(0.8400)">ms</div>
<div class="t" style="left:531.80px;top:637.80px;font-size:11px;font-weight:normal;font-family:'Liberation Sans';color:#000;transform:scaleX(0.9171)">5000mB</div>
<div class="t" style="left:17.40px;top:165.70px;font-size:11px;font-weight:normal;font-family:'Liberation Sans';color:#000;transform:scaleX(0.9200)">1500</div>
<div class="t" style="left:17.40px;top:242.60px;font-size:11px;font-weight:normal;font-family:'Liberation Sans';color:#000;transform:scaleX(0.9200)">1250</div>
<div class="t" style="left:17.40px;top:319.50px;font-size:11px;font-weight:normal;font-family:'Liberation Sans';color:#000;transform:scaleX(0.9200)">1000</div>
<div class="t" style="left:22.92px;top:396.40px;font-size:11px;font-weight:normal;font-family:'Liberation Sans';color:#000;transform:scaleX(0.9200)">750</div>
<div class="t" style="left:22.92px;top:473.30px;font-size:11px;font-weight:normal;font-family:'Liberation Sans';color:#000;transform:scaleX(0.9200)">500</div>
<div class="t" style="left:22.92px;top:550.20px;font-size:11px;font-weight:normal;font-family:'Liberation Sans';color:#000;transform:scaleX(0.9200)">250</div>
<div class="t" style="left:556.70px;top:165.80px;font-size:11px;font-weight:normal;font-family:'Liberation Sans';color:#000;transform:scaleX(0.9200)">0.60</div>
<div class="t" style="left:556.70px;top:242.70px;font-size:11px;font-weight:normal;font-family:'Liberation Sans';color:#000;transform:scaleX(0.9200)">0.50</div>
<div class="t" style="left:556.70px;top:319.60px;font-size:11px;font-weight:normal;font-family:'Liberation Sans';color:#000;transform:scaleX(0.9200)">0.40</div>
<div class="t" style="left:556.70px;top:396.50px;font-size:11px;font-weight:normal;font-family:'Liberation Sans';color:#000;transform:scaleX(0.9200)">0.30</div>
<div class="t" style="left:556.70px;top:473.40px;font-size:11px;font-weight:normal;font-family:'Liberation Sans';color:#000;transform:scaleX(0.9200)">0.20</div>
<div class="t" style="left:556.70px;top:550.30px;font-size:11px;font-weight:normal;font-family:'Liberation Sans';color:#000;transform:scaleX(0.9200)">0.10</div>
<div class="t" style="left:43.28px;top:637.60px;font-size:11px;font-weight:normal;font-family:'Liberation Sans';color:#000;transform:scaleX(0.9200)">0</div>
<div class="t" style="left:87.76px;top:637.60px;font-size:11px;font-weight:normal;font-family:'Liberation Sans';color:#000;transform:scaleX(0.9200)">500</div>
<div class="t" style="left:136.00px;top:637.60px;font-size:11px;font-weight:normal;font-family:'Liberation Sans';color:#000;transform:scaleX(0.9200)">1000</div>
<div class="t" style="left:187.00px;top:637.60px;font-size:11px;font-weight:normal;font-family:'Liberation Sans';color:#000;transform:scaleX(0.9200)">1500</div>
<div class="t" style="left:237.00px;top:637.60px;font-size:11px;font-weight:normal;font-family:'Liberation Sans';color:#000;transform:scaleX(0.9200)">2000</div>
<div class="t" style="left:287.00px;top:637.60px;font-size:11px;font-weight:normal;font-family:'Liberation Sans';color:#000;transform:scaleX(0.9200)">2500</div>
<div class="t" style="left:338.00px;top:637.60px;font-size:11px;font-weight:normal;font-family:'Liberation Sans';color:#000;transform:scaleX(0.9200)">3000</div>
<div class="t" style="left:389.00px;top:637.60px;font-size:11px;font-weight:normal;font-family:'Liberation Sans';color:#000;transform:scaleX(0.9200)">3500</div>
<div class="t" style="left:439.00px;top:637.60px;font-size:11px;font-weight:normal;font-family:'Liberation Sans';color:#000;transform:scaleX(0.9200)">4000</div>
<div class="t" style="left:489.00px;top:637.60px;font-size:11px;font-weight:normal;font-family:'Liberation Sans';color:#000;transform:scaleX(0.9200)">4500</div>

<!-- watermark -->
<div class="a" style="left:532px;top:632px;width:170px;height:35px;background:#505050;mix-blend-mode:multiply"></div>
<div class="t" style="left:541.50px;top:643.30px;font-size:14px;font-weight:normal;font-family:'Liberation Mono';color:#8cc6ac;transform:scaleX(1.0531);-webkit-text-stroke-width:0.45px">www.ssd-tester.pl</div>
</body></html>
